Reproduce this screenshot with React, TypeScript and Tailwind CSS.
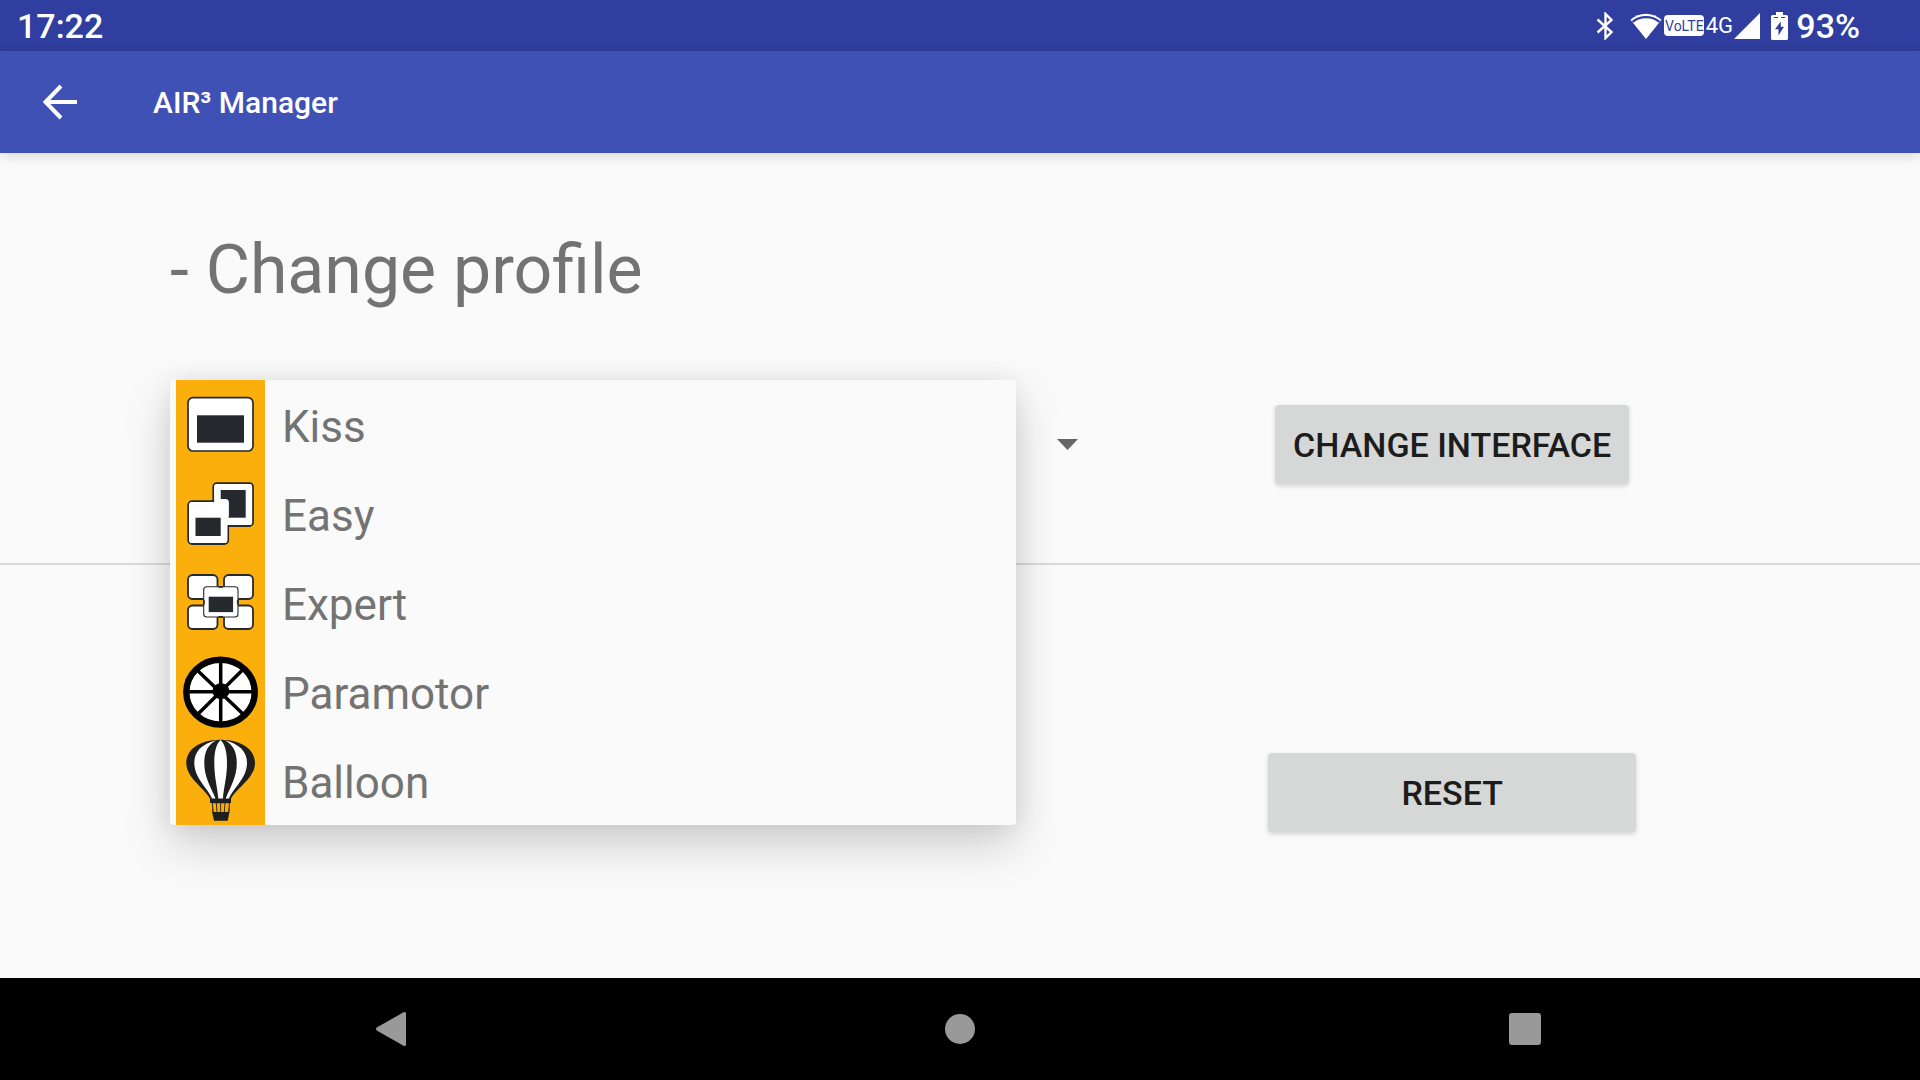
import { useState } from 'react';
import type { ReactNode } from 'react';

interface Profile {
    name: string;
    icon: ReactNode;
}

const KissIcon = () => (
    <svg viewBox="0 0 89 89" className="size-[89px] bg-[#fbaf0d]" aria-hidden="true">
        <rect x="12" y="17.7" width="65" height="53.3" rx="5" fill="#fff" stroke="#26292e" strokeWidth="1.7" />
        <rect x="21" y="35.3" width="47" height="27.4" fill="#26292e" />
    </svg>
);

const EasyIcon = () => (
    <svg viewBox="0 0 89 89" className="size-[89px] bg-[#fbaf0d]" aria-hidden="true">
        <rect x="37.3" y="14.2" width="39.7" height="42.8" rx="3.5" fill="#fff" stroke="#26292e" strokeWidth="1.8" />
        <rect x="12.2" y="32.2" width="40" height="42.8" rx="4" fill="#fff" stroke="#26292e" strokeWidth="1.8" />
        <rect x="38.2" y="15.1" width="37.9" height="41" rx="3" fill="#fff" />
        <rect x="44.7" y="21" width="25" height="27.7" fill="#26292e" />
        <rect x="38.2" y="30" width="14.7" height="20" rx="3.5" fill="#fff" />
        <rect x="13.1" y="33.1" width="38.2" height="41" rx="3.2" fill="#fff" />
        <rect x="19.5" y="48.7" width="25.2" height="18.3" fill="#26292e" />
    </svg>
);

const ExpertIcon = () => (
    <svg viewBox="0 0 89 89" className="size-[89px] bg-[#fbaf0d]" aria-hidden="true">
        <g fill="#fff" stroke="#26292e" strokeWidth="1.8">
            <rect x="12" y="17" width="29.5" height="24" rx="4.5" />
            <rect x="48" y="17" width="29" height="24" rx="4.5" />
            <rect x="12" y="47.5" width="29.5" height="23.5" rx="4.5" />
            <rect x="48" y="47.5" width="29" height="23.5" rx="4.5" />
        </g>
        <rect x="27.7" y="28.7" width="34.3" height="30.3" rx="3" fill="#fff" stroke="#26292e" strokeWidth="1.1" />
        <path d="M42.500 28.900H47M42.500 58.800H47M27.900 42V46.500M61.800 42V46.500" stroke="#26292e" strokeWidth="1.8" />
        <rect x="32.7" y="38.7" width="24.4" height="15.4" fill="#26292e" />
    </svg>
);

const ParamotorIcon = () => (
    <svg viewBox="0 0 89 89" className="size-[89px] bg-[#fbaf0d]" aria-hidden="true">
        <ellipse cx="44.5" cy="45.2" rx="34.2" ry="32.4" fill="#fff" stroke="#000" strokeWidth="6.4" />
        <path d="M44.7 14V76M12 44.7H77M20.5 22.5L67.5 67.5M67 22.5L21.5 67.5" stroke="#000" strokeWidth="3.5" />
        <ellipse cx="44.9" cy="44.2" rx="8.5" ry="8" />
    </svg>
);

const BalloonIcon = () => (
    <svg viewBox="0 0 89 89" className="size-[89px] bg-[#fbaf0d]" aria-hidden="true">
        <path
            d="M44.6 3.7C23 4 10.3 13.500 10.300 27C10.300 42 28 51.500 34 62.700V67H36V76L38 84.700H51.700L53.500 76V67H55V62.700C61 51.500 79 42 79 27C79 13.500 66 4 44.600 3.700Z"
            fill="#1f1f1f"
        />
        <path d="M41 4.300C25 8 18.300 16 18.300 27C18.300 42 31 51 36 62.500H39.500C35 51 28.300 42 28.300 27C28.300 16 32 8 41 4.300Z" fill="#fff" />
        <path d="M48.200 4.300C64 8 71 16 71 27C71 42 58 51 53 62.500H49.700C54 51 60.800 42 60.800 27C60.800 16 57 8 48.200 4.300Z" fill="#fff" />
        <path d="M44.600 4C40 8 38.300 16 38.300 27C38.300 42 41.500 51 42.300 62.500H47C47.700 51 51 42 51 27C51 16 49 8 44.600 4Z" fill="#fff" />
        <path d="M36 67.200H54L52.800 76H36.800Z" fill="#fbaf0d" />
        <path d="M36.300 67L37.300 76M40.300 67L41 76M44.600 67V76M49 67L48.300 76M53.600 67L52.500 76" stroke="#1f1f1f" strokeWidth="0.9" />
    </svg>
);

const profiles: Profile[] = [
    { name: 'Kiss', icon: <KissIcon /> },
    { name: 'Easy', icon: <EasyIcon /> },
    { name: 'Expert', icon: <ExpertIcon /> },
    { name: 'Paramotor', icon: <ParamotorIcon /> },
    { name: 'Balloon', icon: <BalloonIcon /> },
];

const StatusBar = () => (
    <div className="flex h-[51px] items-center justify-between bg-[#303f9f] pr-[60px] pl-[17px] text-[34px] leading-none font-medium text-white">
        <span>17:22</span>
        <div className="flex items-center">
            <svg viewBox="0 0 18 28" className="h-7 w-[18px]" fill="none" stroke="currentColor" strokeWidth="2.4" aria-label="Bluetooth">
                <path d="M1.500 7.500L15.500 20L9.500 26V2L15.500 8L1.500 20.500" />
            </svg>
            <svg viewBox="0 0 32 28" className="ml-4 h-7 w-8" fill="currentColor" aria-label="Wi-Fi">
                <path d="M0.500 7.800C9 -0.400 22.500 -0.400 31.500 7.800L16 27Z" />
                <path d="M2.500 9.800C10.500 3.600 21.500 3.600 29.500 9.800" fill="none" stroke="#303f9f" strokeWidth="2.200" />
            </svg>
            <span className="ml-0.5 flex h-[21px] w-10 items-center justify-center rounded bg-white text-[14px] leading-none font-normal text-[#303f9f]">
                VoLTE
            </span>
            <span className="w-[30px] text-center text-[22px] leading-none font-normal">4G</span>
            <svg viewBox="0 0 26 26" className="size-[26px]" fill="currentColor" aria-label="Signal">
                <path d="M0 26L26 0V26Z" />
            </svg>
            <svg viewBox="0 0 17 28" className="ml-[11px] h-7 w-[17px]" fill="currentColor" aria-label="Charging">
                <path d="M5 0H12V3H15.500Q17 3 17 4.500V26.500Q17 28 15.500 28H1.500Q0 28 0 26.500V4.500Q0 3 1.500 3H5Z" />
                <path d="M9.800 9.500L4 17.300H7.500V23.500L13 14.700H9.800Z" fill="#303f9f" />
                <path d="M3 5.500H7M10 5.500H14" stroke="#303f9f" strokeWidth="1" />
            </svg>
            <span className="ml-2">93%</span>
        </div>
    </div>
);

const AppBar = () => (
    <header className="relative flex h-[102px] items-center bg-[#3f51b5] text-white shadow-[0_2px_12px_rgba(0,0,0,0.16)]">
        <button type="button" aria-label="Back" className="ml-6 flex size-[72px] items-center justify-center">
            <svg viewBox="0 0 36 36" className="size-9" fill="none" stroke="currentColor" strokeWidth="4">
                <path d="M35 18H4M19 2L3.500 18L19 34" />
            </svg>
        </button>
        <h1 className="ml-[57px] pt-0.5 text-[30px] leading-9 font-medium">AIR³ Manager</h1>
    </header>
);

const ProfileSpinner = () => {
    const [open, setOpen] = useState(true);
    const [selected, setSelected] = useState(profiles[0]);

    return (
        <div className="relative">
            <button
                type="button"
                aria-haspopup="listbox"
                aria-expanded={open}
                aria-label="Profile"
                onClick={() => setOpen(!open)}
                className="flex h-32 w-full items-center justify-between pr-4 text-[44px] text-[#737373]"
            >
                <span>{!open && selected.name}</span>
                <svg viewBox="0 0 21 11" className="h-[11px] w-[21px]" fill="#666">
                    <path d="M0 0H21L10.500 11Z" />
                </svg>
            </button>
            {open && (
                <div
                    role="listbox"
                    aria-label="Profiles"
                    className="absolute top-0 right-[78px] left-0 z-10 rounded bg-[#fafafa] pl-1.5 shadow-[0_20px_48px_rgba(0,0,0,0.18),0_0_24px_rgba(0,0,0,0.07)]"
                >
                    {profiles.map((profile) => (
                        <button
                            key={profile.name}
                            type="button"
                            role="option"
                            aria-selected={profile === selected}
                            onClick={() => {
                                setSelected(profile);
                                setOpen(false);
                            }}
                            className="flex w-full items-center gap-[17px] text-left text-[44px] leading-[52px] text-[#737373]"
                        >
                            {profile.icon}
                            <span className="pt-1">{profile.name}</span>
                        </button>
                    ))}
                </div>
            )}
        </div>
    );
};

const actionButton =
    'h-[79px] rounded bg-[#d6d7d7] pt-0.5 text-[34px] font-medium text-[#1c1c1c] shadow-[0_2px_5px_rgba(0,0,0,0.16)]';

const NavBar = () => (
    <nav className="flex h-[102px] bg-black px-[108px] text-[#999]">
        <button type="button" aria-label="Back" className="flex flex-1 items-center justify-center">
            <svg viewBox="0 0 40 40" className="size-10" fill="currentColor">
                <path d="M5.200 18.200L31.500 3.300Q34 2.200 34 4.500V35.500Q34 37.800 31.500 36.700L5.200 21.800Q2.800 20 5.200 18.200Z" />
            </svg>
        </button>
        <button type="button" aria-label="Home" className="flex flex-1 items-center justify-center">
            <svg viewBox="0 0 40 40" className="size-10" fill="currentColor">
                <circle cx="20" cy="20" r="15" />
            </svg>
        </button>
        <button type="button" aria-label="Recent apps" className="flex flex-1 items-center justify-center">
            <svg viewBox="0 0 40 40" className="size-10" fill="currentColor">
                <rect x="1" y="4" width="32" height="32" rx="3" />
            </svg>
        </button>
    </nav>
);

export default function App() {
    return (
        <div className="flex min-h-screen flex-col bg-[#fafafa] font-['Roboto',sans-serif]">
            <StatusBar />
            <AppBar />
            <main className="flex flex-1 flex-col">
                <section className="border-b-2 border-[#dadada] pt-[77px] pb-[55px]">
                    <h2 className="pl-[170px] text-[68px] leading-[80px] text-[#737373]">- Change profile</h2>
                    <div className="mt-[70px] flex items-center">
                        <div className="w-[57%] pl-[170px]">
                            <ProfileSpinner />
                        </div>
                        <div className="flex flex-1 justify-center pr-[110px]">
                            <button type="button" className={`${actionButton} px-[18px]`}>
                                CHANGE INTERFACE
                            </button>
                        </div>
                    </div>
                </section>
                <section className="flex pt-[188px] pb-16">
                    <div className="ml-[57%] flex flex-1 justify-center pr-[110px]">
                        <button type="button" className={`${actionButton} w-[368px]`}>
                            RESET
                        </button>
                    </div>
                </section>
            </main>
            <NavBar />
        </div>
    );
}
